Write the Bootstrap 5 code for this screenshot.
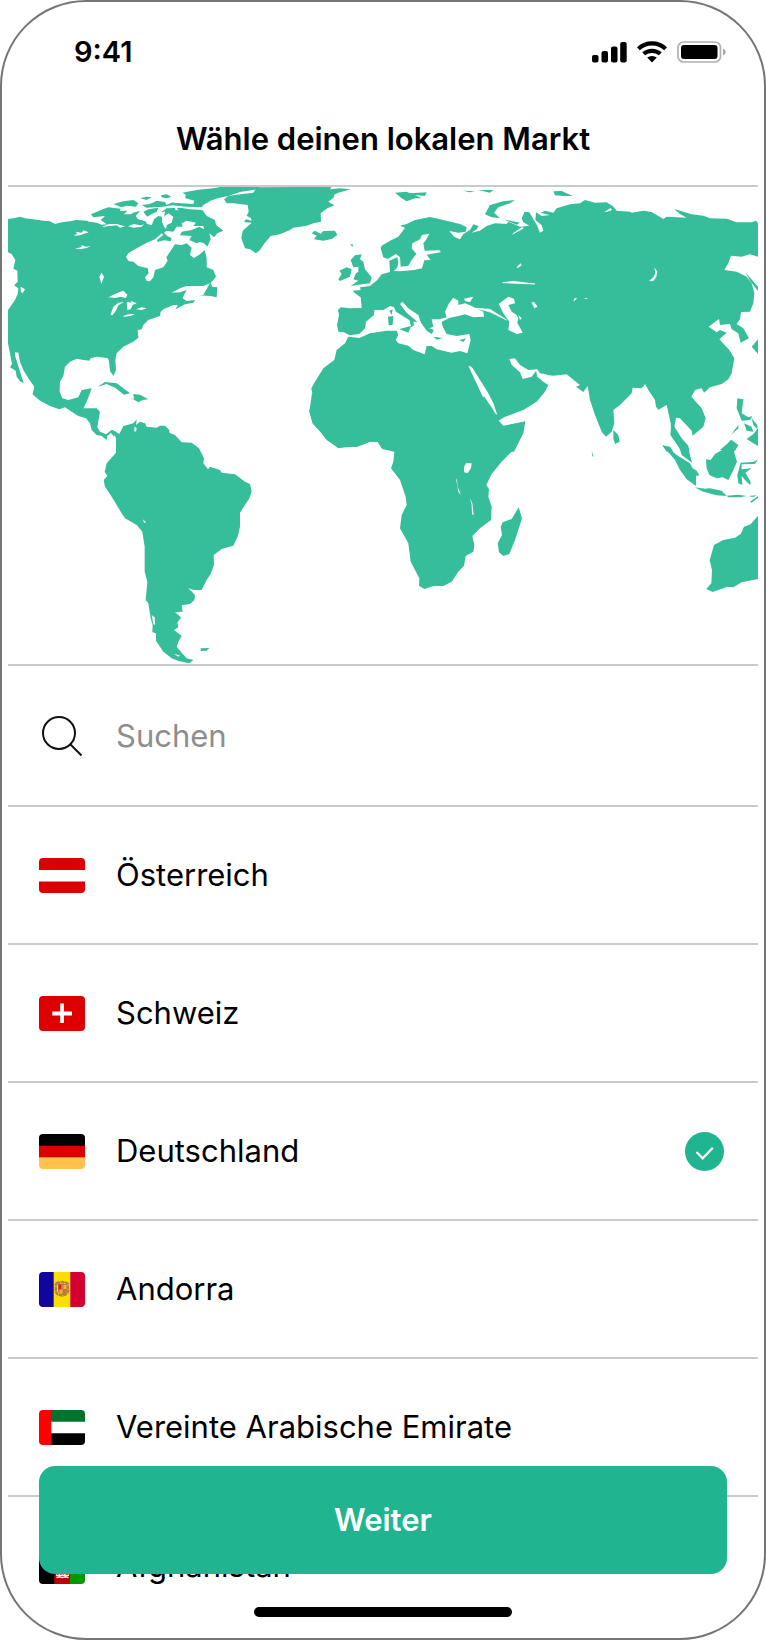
<!DOCTYPE html>
<html lang="de">
<head>
<meta charset="utf-8">
<meta name="viewport" content="width=device-width, initial-scale=1">
<title>Wähle deinen lokalen Markt</title>
<link href="https://cdn.jsdelivr.net/npm/bootstrap@5.3.0/dist/css/bootstrap.min.css" rel="stylesheet">
<style>
  :root { --brand: #20b590; --land: #36bd9a; --rule: #cacaca; }
  body { font-family: Inter, "Liberation Sans", sans-serif; color: #000; background: #fff; }
  .phone { height: 100vh; border: 2px solid #757575; border-radius: 86px; padding: 0 6px; background: #fff; }
  .status-bar { height: 100px; padding: 0 32px 0 66px; font-size: 29px; line-height: 36px; }
  .status-icons { gap: 10px; }
  .title-bar { height: 85px; padding-bottom: 10px; border-bottom: 2px solid var(--rule); }
  .title-bar h1 { font-size: 31px; line-height: 36px; }
  .world { border-bottom: 2px solid var(--rule); }
  .world svg { width: 100%; height: auto; fill: var(--land); }
  .line-row { padding: 0 34px 0 31px; gap: 31px; font-size: 31px; line-height: 36px; border-bottom: 2px solid var(--rule); }
  .search-row { height: 141px; }
  .market-row { height: 138px; cursor: pointer; }
  .market-row:last-child { border-bottom: 0; }
  .search-input, .search-input:focus { padding: 0; border: 0; border-radius: 0; box-shadow: none; font-size: 31px; line-height: 36px; background: transparent; color: #000; }
  .search-input::placeholder { color: #8e8e8e; opacity: 1; }
  .flag { width: 46px; height: 35px; border-radius: 4px; flex: none; }
  .pick { appearance: none; width: 39px; height: 39px; margin: 0; border: 0; border-radius: 50%; background: transparent; flex: none; cursor: pointer; }
  .pick:checked { background: var(--brand) url("data:image/svg+xml,%3Csvg xmlns='http://www.w3.org/2000/svg' viewBox='0 0 39 39'%3E%3Cpath d='M11.500 20l6.200 6.300L27.800 15.700' fill='none' stroke='%23fff' stroke-width='2.200'/%3E%3C/svg%3E"); }
  .bottom-bar { padding: 0 37px 21px; pointer-events: none; }
  .btn-next { --bs-btn-color: #fff; --bs-btn-bg: var(--brand); --bs-btn-hover-color: #fff; --bs-btn-hover-bg: #1ba381; --bs-btn-border-width: 0; --bs-btn-font-size: 31px; --bs-btn-border-radius: 16px; --bs-btn-font-weight: 600; height: 108px; margin-bottom: 33px; pointer-events: auto; }
  .home-indicator { width: 258px; height: 10px; border-radius: 5px; background: #000; }
</style>
</head>
<body>
<main class="phone position-relative overflow-hidden">

  <header>
    <div class="status-bar d-flex align-items-center justify-content-between">
      <time class="fw-semibold">9:41</time>
      <div class="status-icons d-flex align-items-center">
        <svg width="35" height="22" viewBox="0 0 35 22" aria-hidden="true"><rect x="0" y="14" width="6.500" height="7.500" rx="2"/><rect x="9.500" y="10" width="6.500" height="11.500" rx="2"/><rect x="19" y="5.500" width="6.500" height="16" rx="2"/><rect x="28.200" y="1" width="6.500" height="20.500" rx="2"/></svg>
        <svg width="30" height="22" viewBox="0 0 30 22" aria-hidden="true"><path d="M0 6.200Q6.500.3 15 .3T30 6.200L27.200 9.200Q22 4.500 15 4.500T2.800 9.200ZM5.300 11.400Q9.500 7.800 15 7.800T24.700 11.400L21.800 14.300Q19 11.900 15 11.900T8.200 14.300ZM10.200 16.500Q12.300 14.900 15 14.900T19.800 16.500L15 21.500Z"/></svg>
        <svg width="49" height="22" viewBox="0 0 49 22" aria-hidden="true"><rect x="1" y="1" width="42.500" height="20" rx="5.500" fill="none" stroke="#b0b0b0" stroke-width="1.700"/><rect x="4" y="4" width="36.500" height="14" rx="3"/><path d="M46 7.500q2.800 1 2.800 3.500T46 14.500Z" fill="#a8a8a8"/></svg>
      </div>
    </div>
    <div class="title-bar d-flex align-items-center justify-content-center">
      <h1 class="fw-semibold m-0 text-center">Wähle deinen lokalen Markt</h1>
    </div>
  </header>

  <div class="world">
    <svg class="d-block" viewBox="24 561 2250 1431" role="img" aria-label="Weltkarte">
      <!-- North and Central America -->
      <g transform="translate(0 540)">
        <path d="M24,117L45,114 60,110 75,115 100,118 130,122 150,124 165,132 185,127 210,124 228,120 262,122 268,127 250,122 290,128 305,134 325,132 305,141 350,136 360,143 380,137 400,143 425,140 435,130 455,136 462,118 475,108 492,112 486,125 492,140 502,150 492,158 502,168 515,175 512,184 492,181 473,186 471,180 490,165 485,160 465,178 440,188 410,205 385,220 378,230 385,243 400,245 415,258 443,265 446,280 435,292 440,303 450,304 460,292 465,270 490,262 503,242 499,232 512,212 525,193 545,195 560,190 575,203 570,225 582,234 600,223 614,210 620,235 620,262 640,270 648,290 640,300 630,310 610,318 560,318 540,325 515,338 540,337 560,330 552,345 548,355 560,363 585,360 580,368 555,373 527,388 533,375 520,375 490,388 482,395 480,408 445,420 430,435 425,448 413,450 415,473 400,485 370,500 350,520 346,540 348,570 340,588 330,572 327,545 324,535 315,533 290,530 272,535 268,542 250,540 230,536 210,545 195,560 190,588 180,605 179,635 187,655 205,660 235,652 245,630 275,625 270,640 260,665 250,685 290,685 300,695 294,730 292,742 300,755 318,763 335,750 348,756 342,770 333,758 322,768 320,780 305,768 290,765 275,750 270,730 258,715 235,708 215,695 195,682 178,688 150,678 120,662 98,643 103,620 85,595 70,570 60,545 55,518 45,517 46,530 56,562 65,590 71,608 62,606 50,590 47,572 30,562 36,552 28,510 24,490 24,390 45,360 53,342 55,325 42,316 53,305 52,272 40,266 46,240 35,222 24,217Z"/>
        <path d="M273,103L310,87 325,82 362,86 360,93 382,92 372,103 392,103 400,98 420,92 407,108 414,118 438,122 440,132 420,136 402,132 380,140 350,132 320,133 302,120 315,108 280,112ZM340,72L370,64 400,60 415,70 408,80 380,77 365,82ZM420,55L440,50 455,52 440,60ZM483,46L500,43 514,50 500,55 485,52ZM425,75L450,72 470,62 495,66 500,75 520,66 515,76 490,80 440,83ZM430,95L445,88 475,83 470,95 450,105 440,112ZM485,95L500,85 540,83 570,88 607,90 620,108 645,120 648,135 670,152 652,160 642,172 628,160 632,178 622,200 612,190 600,186 590,190 568,180 575,168 540,166 545,155 575,150 598,140 612,148 610,138 580,138 588,128 560,122 545,130 548,140 530,140 520,155 498,152 500,135 515,128 520,110 505,100 490,112Z"/>
        <path d="M547,38L590,30 645,24 665,20 780,20 770,28 720,36 685,48 655,54 632,62 610,75 605,82 560,80 500,74 520,68 580,72 583,62 555,54 558,44ZM610,345L632,305 636,320 652,322 650,352 632,348 596,346ZM293,620L315,606 350,610 370,625 390,640 372,644 345,623 320,612ZM386,656L402,656 400,642 420,644 445,658 428,660 415,667 400,658Z"/>
        <g fill="#fff">
          <path d="M325,352L350,340 370,332 382,344 378,354 362,350 345,354ZM331,405L340,380 355,368 372,366 355,376 348,392 337,406ZM380,365L395,368 392,362 410,370 398,375 392,388 382,390ZM369,408L385,403 405,402 392,408 372,410ZM408,388L425,382 440,385 425,390ZM298,290L305,278 312,290 304,312ZM222,167L232,160 226,155 245,158 250,151 266,157 250,162 240,166ZM225,206L245,201 245,195 258,200 272,198 260,204 240,208ZM62,320L75,328 68,340 62,335Z"/>
          <path d="M412,104L425,92 440,108 455,118 440,125 418,118ZM484,98L495,94 492,118 488,130ZM524,88L530,80 535,92Z"/>
        </g>
      </g>
      <!-- Greenland and Iceland -->
      <g transform="translate(600 540)">
        <path d="M72,58L85,48 110,44 160,38 170,22 395,20 390,28 420,25 452,28 415,38 403,44 402,52 385,65 403,76 382,85 362,100 363,125 340,130 320,137 280,143 270,150 240,163 212,168 192,192 180,210 168,220 150,208 135,205 124,175 128,152 155,128 132,126 138,118 155,122 152,114 140,107 146,95 143,75 100,70 80,70Z"/>
        <path d="M335,160L345,152 362,162 370,153 405,152 412,165 395,177 370,182 342,178 350,167Z"/>
      </g>
      <!-- Europe, northern Africa and the Middle East -->
      <g transform="translate(870 540)">
        <path d="M782,105L755,108 738,97 736,120 755,136 760,152 750,158 742,138 730,118 718,97 704,95 695,115 700,127 718,137 690,140 655,125 650,132 615,130 590,138 570,152 545,158 560,148 566,138 550,133 540,150 520,162 510,178 492,170 478,153 505,158 527,155 530,142 510,132 460,120 420,111 375,120 350,132 330,137 345,143 325,170 300,182 275,197 272,205 280,232 293,237 318,222 330,232 332,260 355,257 365,240 379,222 365,205 367,190 390,178 396,165 418,161 408,180 400,190 404,212 450,211 452,217 410,224 422,240 403,241 396,265 372,270 330,274 312,273 322,262 325,248 322,232 298,242 300,276 275,283 262,300 240,318 210,322 212,330 188,332 195,340 212,352 215,384 180,385 152,382 144,390 147,405 141,435 145,455 162,457 178,466 208,462 225,445 228,425 252,405 253,390 280,390 300,378 312,382 318,395 338,408 358,420 363,438 328,447 355,458 362,442 372,436 370,425 382,425 350,398 330,372 337,365 355,385 385,405 392,427 410,452 425,462 432,450 418,445 430,440 425,418 448,418 470,412 465,395 477,370 490,353 505,362 505,375 525,370 545,378 580,395 582,410 550,412 525,403 505,408 480,413 455,425 458,440 470,462 500,468 538,462 542,480 532,520 510,513 485,518 440,508 425,498 410,498 404,523 370,510 355,497 325,490 317,480 325,465 320,452 290,452 240,460 208,474 175,470 165,490 140,510 133,540 100,565 75,605 64,625 70,655 58,692 68,730 95,760 110,780 145,803 200,800 240,785 263,785 277,807 313,815 672,815 700,760 706,724 640,738 626,722 642,712 700,690 740,665 765,635 775,615 760,605 742,590 738,573 725,590 698,597 690,577 665,555 658,537 675,535 690,555 715,570 742,568 750,580 782,585Z"/>
        <path d="M145,298L155,282 148,272 170,262 185,268 180,290 150,303ZM182,240L195,226 215,223 210,238 220,245 225,268 245,292 240,310 215,313 182,318 205,302 190,298 198,280 205,275 205,260 190,262ZM315,38L350,35 360,40 410,37 405,48 375,45 395,55 375,55 350,64 335,55ZM518,32L555,34 540,37ZM565,30L610,30 600,38ZM585,103L600,75 640,64 675,60 660,70 625,82 612,98 630,115 605,112ZM294,410L310,408 308,434 296,436ZM298,392L308,388 305,405ZM430,470L458,474 440,479ZM508,480L528,475 520,486ZM640,118L690,128 680,134ZM180,192L190,194 187,200Z"/>
        <g fill="#fff">
          <path d="M626,372L655,350 672,356 675,370 655,375 665,395 680,405 685,415 682,428 698,458 680,462 655,450 658,425 640,400ZM725,368L740,375 735,385ZM680,262L692,250 695,256 682,264ZM522,356L550,350 540,366 526,364ZM685,405L695,415 690,420ZM535,558L545,560 570,600 595,640 610,670 622,705 606,692 580,655 562,615Z"/>
          <path d="M638,308L670,304 735,312 700,311ZM668,162L700,145 696,142ZM560,385L600,388 650,420 600,396Z" stroke="#fff" stroke-width="2"/>
        </g>
      </g>
      <!-- Asia -->
      <g transform="translate(1560 540)">
        <path d="M88,105L62,98 75,92 100,98 110,85 150,73 180,70 195,60 225,68 260,67 278,78 290,92 330,95 335,98 370,92 395,96 415,108 430,117 440,110 500,113 480,102 462,87 490,95 515,103 550,107 570,115 620,116 650,127 695,127 708,122 714,130 714,230 690,223 665,230 633,227 625,250 613,270 650,275 680,290 695,310 703,340 700,370 690,395 663,396 660,418 650,432 670,445 687,475 662,488 655,460 635,448 630,432 600,435 597,417 566,440 590,457 600,450 620,458 598,478 628,510 643,535 635,580 625,598 605,612 570,622 552,638 545,625 525,630 514,650 545,685 557,715 550,740 518,767 515,752 480,715 468,713 463,740 485,775 505,797 508,815 485,815 455,770 452,730 440,675 415,689 408,680 405,660 385,630 375,612 365,625 338,623 335,640 300,675 280,690 283,730 275,755 258,770 245,755 225,705 210,660 203,618 190,636 168,620 180,615 140,583 100,587 80,585Z"/>
        <path d="M100,34L125,33 158,48 130,48 105,46ZM280,750L295,765 299,785 285,792 280,775ZM677,278L714,320 714,333 690,302ZM714,478L695,500 714,522ZM652,655L670,658 665,700 685,712 697,708 690,720 665,722 650,685ZM632,766L655,735 655,745ZM672,730L695,740 700,755 680,752ZM695,715L712,735 712,748 700,735ZM680,777L700,762 714,745 714,798 700,790ZM600,810L635,780 655,795 645,812ZM427,796L450,800 460,815 440,815Z"/>
        <path fill="#fff" d="M403,262L412,275 409,290 400,304 387,303 400,292 406,280ZM160,365L163,355 172,355ZM34,368L42,365 52,380 44,385ZM252,97L272,84 276,90 262,95ZM190,355L202,354 202,357Z"/>
      </g>
      <!-- South America -->
      <g transform="translate(0 1200)">
        <path d="M328,95L338,90 358,102 370,78 400,70 410,58 408,75 420,65 435,70 440,80 470,83 480,77 495,77 508,90 508,98 525,105 545,127 575,128 597,145 612,175 610,190 624,208 630,200 660,210 665,218 705,223 735,245 750,252 755,275 748,295 720,338 720,380 713,410 700,437 665,447 641,465 642,495 632,522 620,540 605,570 582,570 565,565 585,585 583,600 570,612 545,616 548,635 525,637 543,652 532,668 535,682 522,690 545,708 535,725 530,740 545,758 560,775 580,780 568,790 535,783 515,775 490,755 468,722 468,700 457,697 458,675 452,655 445,610 437,600 442,545 434,515 434,440 427,395 410,375 375,355 365,340 335,290 315,260 311,240 322,228 314,215 320,190 348,158 348,115 342,98ZM602,745L628,744 620,752 602,753Z"/>
        <path fill="#fff" d="M404,80L410,84 408,95 402,93ZM429,358L438,367 432,368ZM455,645L464,652 465,675 460,672ZM522,762L540,766 535,770Z"/>
      </g>
      <!-- Southern Africa, Indonesia and Australia -->
      <g transform="translate(870 1200)">
        <path d="M66,-20L58,35 68,70 95,100 115,122 145,145 180,137 200,141 240,125 263,125 277,147 300,145 313,155 310,185 303,205 330,240 347,290 350,315 335,345 330,385 355,430 362,485 388,535 387,557 403,567 430,558 460,558 485,545 505,515 522,497 527,468 550,455 553,435 547,408 570,385 603,360 605,320 595,290 597,268 589,255 605,222 635,185 672,148 690,115 705,65 640,78 625,62 610,30 583,-10ZM686,322L696,355 675,420 658,462 640,468 627,457 623,430 636,405 632,380 638,367 665,357ZM1145,55L1141,105 1165,132 1175,165 1206,188 1195,145 1170,115 1156,90ZM1117,136L1135,143 1160,165 1200,190 1208,205 1220,212 1228,226 1218,228 1218,258 1190,238 1170,210 1155,180ZM1214,262L1245,266 1260,265 1295,272 1310,288 1280,286 1240,275ZM1310,287L1345,284 1370,288 1350,292 1315,292ZM1380,305L1404,288 1404,293 1385,308ZM1375,288L1400,286 1390,291ZM1248,178L1262,180 1275,162 1300,148 1322,120 1342,138 1332,155 1341,185 1330,210 1315,240 1298,232 1280,235 1258,225 1250,205ZM1352,188L1390,186 1404,178 1395,192 1355,193 1355,208 1385,205 1366,218 1382,245 1380,255 1365,240 1355,228 1357,255 1345,250 1342,225ZM1404,347L1382,373 1362,380 1352,402 1335,413 1300,420 1272,435 1265,460 1259,480 1266,510 1264,550 1249,567 1268,576 1310,561 1330,562 1355,547 1404,537ZM905,152L911,172 907,168Z"/>
        <path fill="#fff" d="M522,200L528,190 545,190 543,205 533,219 522,217ZM498,235L501,240 503,260 513,285 505,275ZM540,294L547,310 551,345 546,343 545,315Z"/>
      </g>
    </svg>
  </div>

  <form id="market-form">
    <label class="line-row search-row d-flex align-items-center">
      <svg class="flex-shrink-0" width="46" height="42" viewBox="0 0 46 42" fill="none" stroke="#111" stroke-width="2" aria-hidden="true"><circle cx="20" cy="18" r="16"/><path d="M31 29L42.500 40.500"/></svg>
      <input class="form-control search-input" type="text" placeholder="Suchen" aria-label="Suchen">
    </label>

    <div>
      <label class="line-row market-row d-flex align-items-center">
        <svg class="flag" viewBox="0 0 46 35" aria-hidden="true"><path fill="#d00" d="M0 0h46v35H0z"/><path fill="#fff" d="M0 12h46v11.500H0z"/></svg>
        <span class="flex-grow-1">Österreich</span>
        <input class="pick" type="radio" name="market" value="at">
      </label>
      <label class="line-row market-row d-flex align-items-center">
        <svg class="flag" viewBox="0 0 46 35" aria-hidden="true"><path fill="#d00" d="M0 0h46v35H0z"/><path fill="#fff" d="M13.300 15.500h7.900V7.500h3.700v8h8.100v4h-8.100V27h-3.700v-7.500h-7.900z"/></svg>
        <span class="flex-grow-1">Schweiz</span>
        <input class="pick" type="radio" name="market" value="ch">
      </label>
      <label class="line-row market-row d-flex align-items-center">
        <svg class="flag" viewBox="0 0 46 35" aria-hidden="true"><path d="M0 0h46v12H0z"/><path fill="#d00" d="M0 11.800h46v12H0z"/><path fill="#ffc24a" d="M0 23.500h46V35H0z"/></svg>
        <span class="flex-grow-1">Deutschland</span>
        <input class="pick" type="radio" name="market" value="de" checked>
      </label>
      <label class="line-row market-row d-flex align-items-center">
        <svg class="flag" viewBox="0 0 46 35" aria-hidden="true"><path fill="#10069f" d="M0 0h16v35H0z"/><path fill="#fedd00" d="M14.700 0h17v35h-17z"/><path fill="#d50032" d="M31.300 0H46v35H31.300z"/>
          <path fill="none" stroke="#a8854e" stroke-width="2.500" stroke-dasharray="4 .6" d="M17.500 11.500q2-1.500 3-.5 2.500-2 5 0 2-1 3.500.8-1 3 .5 5.500-.5 3-1.500 4.500-2 1-2.500 1-2 1.500-4.500 0-3 0-3.500-2-1.500-2-.5-4-1-3 .5-5.300z"/><path fill="#c7772b" d="M19 12h9v7q-1 4-4.500 4T19 19z"/><path fill="#d8232c" d="M19.500 12.500h3.800V17h-3.800z"/><path fill="#f0b43c" d="M20.500 18h2.500v3.800h-2.500zM24.500 13h3v4h-3z"/><path fill="#d9a08b" d="M22.500 13h1v9h-1z"/></svg>
        <span class="flex-grow-1">Andorra</span>
        <input class="pick" type="radio" name="market" value="ad">
      </label>
      <label class="line-row market-row d-flex align-items-center">
        <svg class="flag" viewBox="0 0 46 35" aria-hidden="true"><path fill="#fff" d="M0 0h46v35H0z"/><path fill="#00732f" d="M12 0h34v11.800H12z"/><path d="M12 23.300h34V35H12z"/><path fill="#f00" d="M0 0h12.300v35H0z"/></svg>
        <span class="flex-grow-1">Vereinte Arabische Emirate</span>
        <input class="pick" type="radio" name="market" value="ae">
      </label>
      <label class="line-row market-row d-flex align-items-center">
        <svg class="flag" viewBox="0 0 46 35" aria-hidden="true"><path d="M0 0h16v35H0z"/><path fill="#be0000" d="M15.300 0h16v35h-16z"/><path fill="#009a00" d="M31 0h15v35H31z"/><path fill="none" stroke="#fff" stroke-width="1.500" d="M18 14q-2 8 3 12M28.500 14q2 8-3 12M20 23h7v-7h-7zM17 26l3.500 1 3-1 3 1 3.500-1M17.500 28.500l3-.8 3 .8 3-.8 3 .8"/></svg>
        <span class="flex-grow-1">Afghanistan</span>
        <input class="pick" type="radio" name="market" value="af">
      </label>
    </div>
  </form>

  <div class="bottom-bar position-absolute bottom-0 start-0 end-0 d-flex flex-column align-items-center">
    <button class="btn btn-next w-100" type="submit" form="market-form">Weiter</button>
    <div class="home-indicator"></div>
  </div>
</main>
<script src="https://cdn.jsdelivr.net/npm/bootstrap@5.3.0/dist/js/bootstrap.bundle.min.js"></script>
</body>
</html>
